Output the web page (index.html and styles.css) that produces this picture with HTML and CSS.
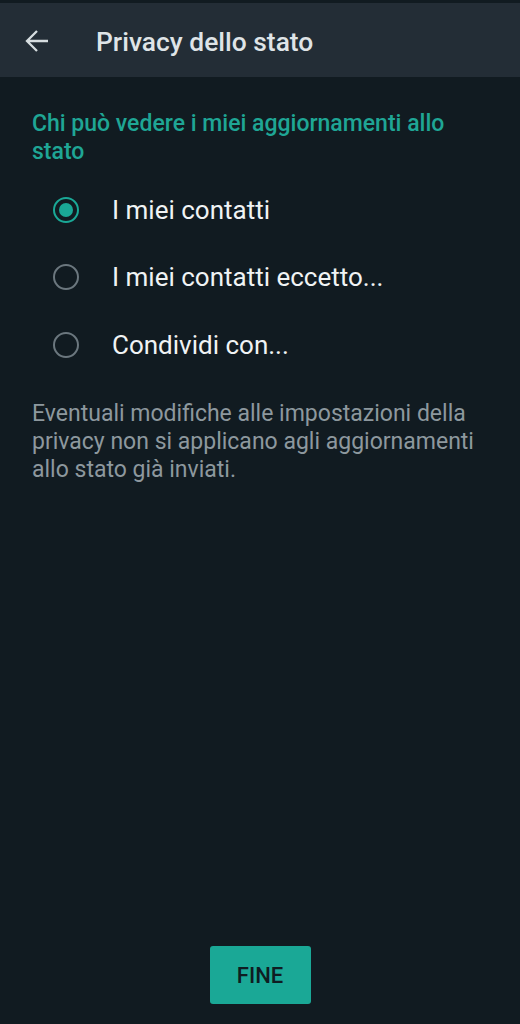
FILE: index.html
```html
<!DOCTYPE html>
<html lang="it">
<head>
    <meta charset="UTF-8">
    <meta name="viewport" content="width=device-width, initial-scale=1.0">
    <title>Privacy dello stato</title>
    <link rel="stylesheet" href="styles.css">
</head>
<body>

<div class="screen">
    <div class="status-bar"></div>

    <header class="app-bar">
        <button class="back" aria-label="Indietro">
            <svg width="24" height="24" viewBox="0 0 24 24"><path d="M23 12H2M12 2L2 12l10 10" fill="none" stroke="currentColor" stroke-width="2.3"/></svg>
        </button>
        <h1>Privacy dello stato</h1>
    </header>

    <main class="content">
        <h2 class="section-title">Chi può vedere i miei aggiornamenti allo stato</h2>

        <ul class="options">
            <li class="option checked"><span class="radio"></span>I miei contatti</li>
            <li class="option"><span class="radio"></span>I miei contatti eccetto...</li>
            <li class="option"><span class="radio"></span>Condividi con...</li>
        </ul>

        <p class="note">Eventuali modifiche alle impostazioni della privacy non si applicano agli aggiornamenti allo stato già inviati.</p>
    </main>

    <footer class="bottom">
        <button class="btn-done">FINE</button>
    </footer>
</div>

</body>
</html>
```

FILE: styles.css
```css
body { margin: 0; background: #111b21; font-family: Roboto, 'Noto Sans', sans-serif; color: #e9edef; }
.screen { height: 1024px; display: flex; flex-direction: column; }

.status-bar { height: 3px; background: #111b21; }
.app-bar { height: 74px; background: #232d36; display: flex; align-items: center; }
.back { background: none; border: none; color: #d6dde0; padding: 0; margin: 1px 0 0 25px; width: 24px; height: 24px; display: flex; }
.app-bar h1 { margin: 3px 0 0 47px; font-size: 26.4px; font-weight: 500; color: #dfe4e7; }

.content { flex: 1; padding: 0 12px 0 32px; }
.section-title { margin: 33px 40px 0 0; font-size: 23px; font-weight: 500; line-height: 28px; color: #1fa695; }

.options { list-style: none; margin: 10px 0 0 0; padding: 0; }
.option { display: flex; align-items: center; height: 67.5px; font-size: 26px; color: #f0f3f4; }
.radio { width: 22px; height: 22px; border: 2.5px solid #6b777e; border-radius: 50%; margin: 0 33px 0 21px; position: relative; box-sizing: content-box; }
.checked .radio { border-color: #1aa896; }
.checked .radio::after { content: ""; position: absolute; left: 4px; top: 4px; width: 14px; height: 14px; border-radius: 50%; background: #1aa896; }

.note { margin: 21px 0 0 0; font-size: 23px; line-height: 28px; color: #8d989e; }

.bottom { display: flex; justify-content: center; padding-bottom: 20px; }
.btn-done { width: 101px; height: 58px; border: none; border-radius: 3px; background: #1aa896; color: #0f1d22; font-family: Roboto, sans-serif; font-size: 22px; font-weight: 500; }
```
